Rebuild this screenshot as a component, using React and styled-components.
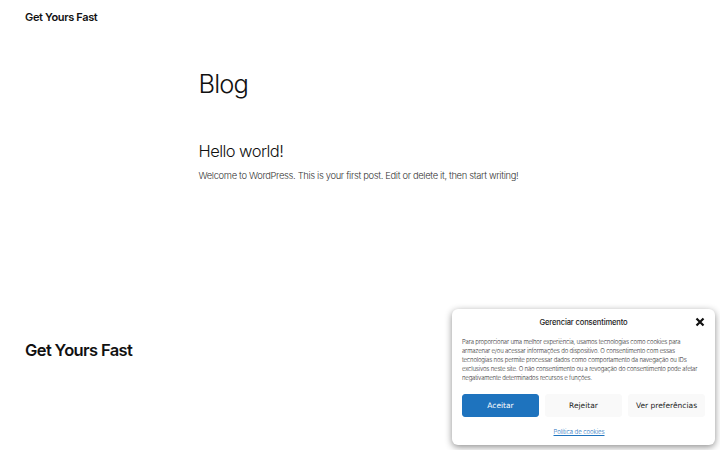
import React from "react";
import styled, { createGlobalStyle } from "styled-components";

const Global = createGlobalStyle`
  html, body { margin: 0; padding: 0; background: #fff; }
  body { font-family: Inter, "Noto Sans", sans-serif; color: #111; overflow: hidden; }
`;
const Page = styled.div`
  width: 720px; height: 450px; display: flex; flex-direction: column; position: relative; overflow: hidden;
`;
const Header = styled.header`
  height: 34px; padding-left: 25px; display: flex; align-items: center; box-sizing: border-box;
`;
const SiteTitle = styled.div`
  font-size: 11px; font-weight: 600; letter-spacing: -0.35px; color: #111;
`;
const Main = styled.main`
  padding: 33px 0 0 198.5px; height: 276px; box-sizing: border-box;
`;
const PageTitle = styled.h1`
  margin: 0; font-size: 25.5px; line-height: 33px; font-weight: 300; letter-spacing: -0.9px; color: #111;
`;
const PostTitle = styled.h2`
  margin: 40px 0 0; font-size: 16.5px; line-height: 22px; font-weight: 300; letter-spacing: -0.55px; color: #111;
`;
const PostBody = styled.p`
  margin: 6px 0 0; font-size: 9.4px; line-height: 16px; font-weight: 300; letter-spacing: -0.34px; color: #333; white-space: nowrap;
`;
const Footer = styled.footer`
  padding: 29px 0 0 25px;
`;
const FooterTitle = styled.div`
  font-size: 16.5px; line-height: 22px; font-weight: 600; letter-spacing: -0.62px; color: #111;
`;
const Banner = styled.aside`
  position: absolute; left: 452px; top: 309px; width: 263px; height: 136px; box-sizing: border-box;
  background: #fff; border-radius: 6px; box-shadow: 0 2px 7px rgba(0,0,0,.45);
  padding: 0 10px; display: flex; flex-direction: column;
`;
const BannerHead = styled.div`
  height: 26px; display: flex; align-items: center; justify-content: center; position: relative;
`;
const BannerTitle = styled.div`
  font-size: 7.6px; font-weight: 500; color: #222; letter-spacing: -0.15px; margin-top: 1px;
`;
const Close = styled.button`
  position: absolute; right: 0; top: 8px; width: 10px; height: 10px; padding: 0; border: 0; background: none; display: flex;
`;
const BannerText = styled.p`
  margin: 2px 0 0; font-size: 6px; line-height: 9px; font-weight: 300; color: #333; letter-spacing: -0.18px; white-space: pre;
`;
const Buttons = styled.div`
  margin-top: 12px; display: grid; grid-template-columns: repeat(3, 77px); justify-content: space-between;
`;
const Btn = styled.button`
  height: 23px; padding: 0; border: 1px solid ${p => (p.$primary ? "#1e73be" : "#f9f9f9")}; border-radius: 3px;
  background: ${p => (p.$primary ? "#1e73be" : "#f9f9f9")}; color: ${p => (p.$primary ? "#fff" : "#222")};
  font-family: "DejaVu Sans", sans-serif; font-size: 7.5px;
`;
const Policy = styled.a`
  margin-top: 10px; padding-right: 9px; text-align: center; font-size: 6.1px; line-height: 9px; font-weight: 300; color: #1e73be; text-decoration: underline; letter-spacing: -0.1px;
`;

export default function App() {
  return (
    <Page>
      <Global />
      <Header><SiteTitle>Get Yours Fast</SiteTitle></Header>
      <Main>
        <PageTitle>Blog</PageTitle>
        <PostTitle>Hello world!</PostTitle>
        <PostBody>Welcome to WordPress. This is your first post. Edit or delete it, then start writing!</PostBody>
      </Main>
      <Footer><FooterTitle>Get Yours Fast</FooterTitle></Footer>
      <Banner>
        <BannerHead>
          <BannerTitle>Gerenciar consentimento</BannerTitle>
          <Close aria-label="Fechar">
            <svg width="10" height="10" viewBox="0 0 10 10"><path d="M1.5 1.5 8.5 8.5M8.5 1.5 1.5 8.5" stroke="#111" strokeWidth="2.2" /></svg>
          </Close>
        </BannerHead>
        <BannerText>{`Para proporcionar uma melhor experiência, usamos tecnologias como cookies para
armazenar e/ou acessar informações do dispositivo. O consentimento com essas
tecnologias nos permite processar dados como comportamento da navegação ou IDs
exclusivos neste site. O não consentimento ou a revogação do consentimento pode afetar
negativamente determinados recursos e funções.`}</BannerText>
        <Buttons>
          <Btn $primary>Aceitar</Btn>
          <Btn>Rejeitar</Btn>
          <Btn>Ver preferências</Btn>
        </Buttons>
        <Policy href="#">Política de cookies</Policy>
      </Banner>
    </Page>
  );
}
